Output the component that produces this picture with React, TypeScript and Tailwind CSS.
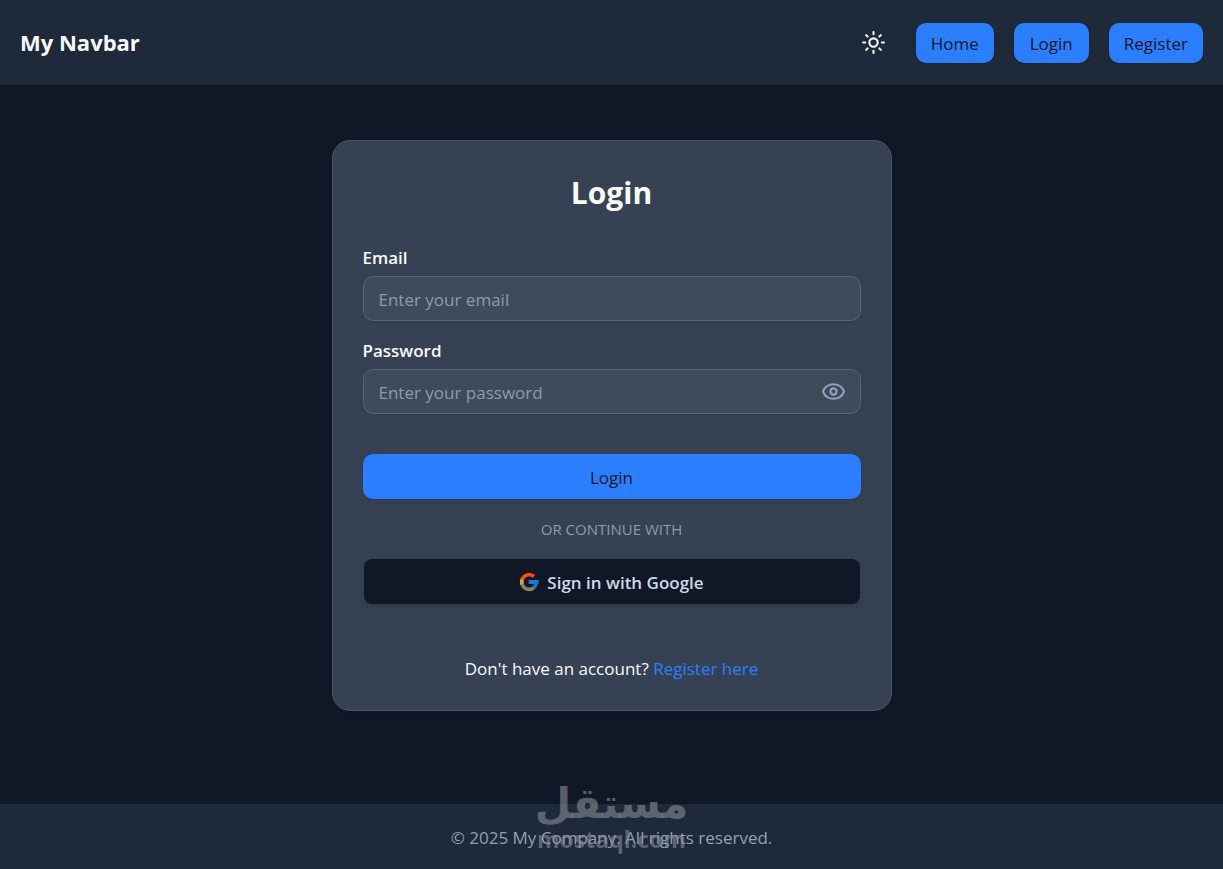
import { useState } from "react";
import { Eye, EyeOff, Sun } from "lucide-react";

const navLinks = [
  { label: "Home", href: "#home" },
  { label: "Login", href: "#login" },
  { label: "Register", href: "#register" },
];

const labelClass = "block pb-1.5 text-[17px] leading-6 font-semibold text-gray-50";

const inputClass =
  "h-[45px] w-full rounded-[10px] border border-[#5a6473] bg-[#3f4a5a] px-[15px] pt-0.5 text-[17px] text-white shadow-sm placeholder:text-[#8b9bb0] focus:outline-none focus:ring-1 focus:ring-[#2b7fff]";

function GoogleIcon() {
  return (
    <svg viewBox="0 0 24 24" className="size-5" aria-hidden="true">
      <path fill="#ff4a00" d="M12 5.4c1.6 0 3.1.6 4.2 1.6l3.2-3.2A11 11 0 0 0 2.2 7.1l3.7 2.8C6.7 7.3 9.1 5.4 12 5.4z" />
      <path fill="#cda35a" d="M5.9 14.1a6.6 6.6 0 0 1 0-4.2L2.2 7.1a11 11 0 0 0 0 9.8z" />
      <path fill="#85845a" d="M12 23c3 0 5.5-1 7.3-2.7l-3.6-2.8c-1 .7-2.2 1.1-3.7 1.1-2.9 0-5.300-1.900-6.100-4.500l-3.700 2.800A11 11 0 0 0 12 23z" />
      <path fill="#2373d0" d="M23.500 9.500H11.500v4.800h6.400a5 5 0 0 1-2.200 3.200l3.600 2.800c1.600-1.500 2.700-3.300 3.100-6.300h1.100z" />
    </svg>
  );
}

function Navbar() {
  return (
    <header className="flex h-[85px] items-center justify-between bg-gray-800 px-5">
      <span className="text-[22px] font-bold text-gray-50">My Navbar</span>
      <nav className="flex items-center gap-5">
        <button type="button" aria-label="Toggle theme" className="mr-2.5 text-gray-50">
          <Sun size={25} />
        </button>
        {navLinks.map((link) => (
          <a
            key={link.label}
            href={link.href}
            className="flex h-10 min-w-[75px] items-center justify-center rounded-[10px] bg-[#2b7fff] px-[15px] pt-0.5 text-[17px] font-medium text-gray-900 shadow-sm"
          >
            {link.label}
          </a>
        ))}
      </nav>
    </header>
  );
}

function LoginCard() {
  const [showPassword, setShowPassword] = useState(false);

  return (
    <section className="w-full max-w-[560px] rounded-[18px] border border-gray-600 bg-gray-700 px-[30px] pt-[30px] pb-7 shadow-sm">
      <h1 className="text-center text-[30px] leading-[43px] font-bold text-gray-50">Login</h1>

      <form className="mt-8" onSubmit={(e) => e.preventDefault()}>
        <label htmlFor="email" className={labelClass}>
          Email
        </label>
        <input id="email" type="email" placeholder="Enter your email" className={inputClass} />

        <label htmlFor="password" className={`mt-[18px] ${labelClass}`}>
          Password
        </label>
        <div className="relative">
          <input
            id="password"
            type={showPassword ? "text" : "password"}
            placeholder="Enter your password"
            className={inputClass}
          />
          <button
            type="button"
            aria-label="Show password"
            onClick={() => setShowPassword(!showPassword)}
            className="absolute inset-y-0 right-[15px] flex items-center text-[#90a4bd]"
          >
            {showPassword ? <EyeOff size={25} /> : <Eye size={25} />}
          </button>
        </div>

        <button
          type="submit"
          className="mt-10 h-[45px] w-full rounded-[10px] bg-[#2b7fff] pt-0.5 text-[17px] font-medium text-gray-900 shadow-sm"
        >
          Login
        </button>
      </form>

      <p className="mt-5 text-center text-[15px] leading-5 text-[#8b9bb0]">OR CONTINUE WITH</p>

      <div className="mt-5 px-px">
        <button
          type="button"
          className="flex h-[45px] w-full items-center justify-center gap-2 rounded-[8px] bg-[#101726] text-[17px] font-semibold text-[#d1d9e6] shadow-md"
        >
          <GoogleIcon />
          <span className="pt-0.5">Sign in with Google</span>
        </button>
      </div>

      <p className="mt-[52px] text-center text-[17px] leading-[26px] text-gray-50">
        Don't have an account?{" "}
        <a href="#register" className="text-[#2b7fff]">
          Register here
        </a>
      </p>
    </section>
  );
}

function Watermark() {
  return (
    <div className="pointer-events-none absolute inset-x-0 bottom-[18px] flex flex-col items-center font-bold text-[#8b8d94]/60">
      <span dir="rtl" lang="ar" className="font-['DejaVu_Sans',sans-serif] text-[42px] leading-[46px]">
        مستقل
      </span>
      <span className="font-['Open_Sans',sans-serif] text-[23px] leading-6">mostaql.com</span>
    </div>
  );
}

export default function App() {
  return (
    <div className="flex min-h-screen flex-col bg-[#101726] font-['Open_Sans','Noto_Sans',sans-serif]">
      <Navbar />
      <main className="flex flex-1 items-start justify-center px-5 pt-[55px] pb-[92px]">
        <LoginCard />
      </main>
      <footer className="relative flex h-[65px] items-center justify-center bg-gray-800 pt-0.5 text-[17px] text-[#90a1b9]">
        <p>© 2025 My Company. All rights reserved.</p>
        <Watermark />
      </footer>
    </div>
  );
}
